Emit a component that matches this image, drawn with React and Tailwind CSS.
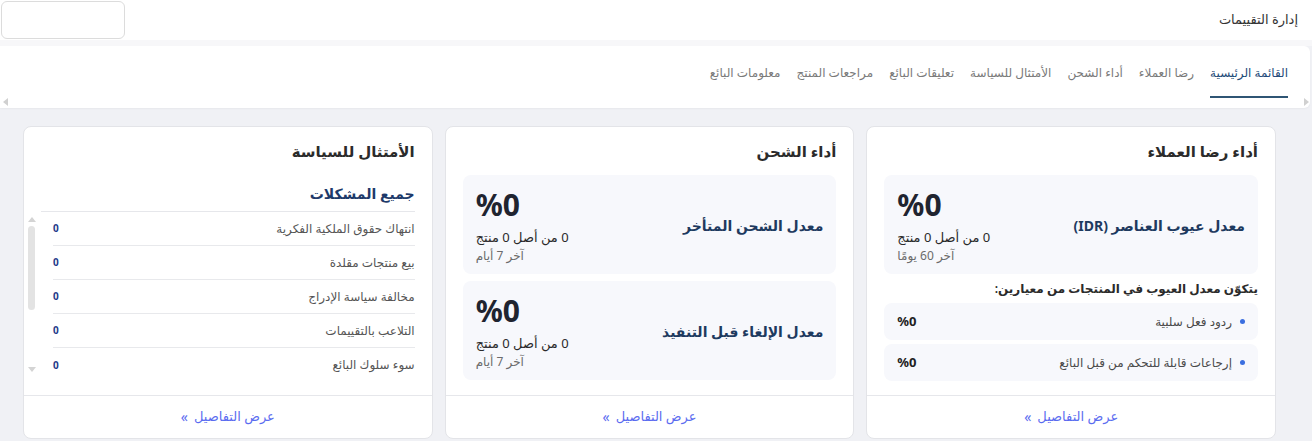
import React from "react";

const tabs = [
  "القائمة الرئيسية",
  "رضا العملاء",
  "أداء الشحن",
  "الأمتثال للسياسة",
  "تعليقات البائع",
  "مراجعات المنتج",
  "معلومات البائع",
];

function Metric({ label, sub }) {
  return (
    <div className="bg-[#f7f8fc] rounded-lg h-[99px] px-[13px] flex items-center justify-between">
      <div className="text-[14px] font-bold text-[#1e3a5f] pt-[2px]">{label}</div>
      <div className="flex flex-col items-end pt-[2px]">
        <div className="text-[30px] font-bold text-[#1f2430] leading-[36px]">%0</div>
        <div className="text-[13px] text-[#2a2a2a] leading-[20px] mt-[4px]">0 من أصل 0 منتج</div>
        <div className="text-[12px] text-[#6b6b6b] leading-[18px]">{sub}</div>
      </div>
    </div>
  );
}

function Footer() {
  return (
    <div className="border-t border-[#e6e7eb] h-[43px] flex items-center justify-center shrink-0">
      <span className="text-[13px] text-[#5b6cf0] flex items-center gap-[6px]">
        عرض التفاصيل
        <span className="text-[14px] leading-none">»</span>
      </span>
    </div>
  );
}

function Card({ title, children }) {
  return (
    <div className="w-[410px] h-[313px] bg-white border border-[#e3e4e8] rounded-lg flex flex-col overflow-hidden">
      <div className="flex-1 px-[17px] pt-[13px]">
        <div className="text-[15px] font-bold text-[#2b2b2b] leading-[22px] mb-[13px]">{title}</div>
        {children}
      </div>
      <Footer />
    </div>
  );
}

function SubRow({ label }) {
  return (
    <div className="bg-[#f7f8fc] rounded-lg h-[37px] px-[13px] flex items-center justify-between">
      <div className="flex items-center gap-[8px]">
        <span className="w-[5px] h-[5px] rounded-full bg-[#3b6fe0]"></span>
        <span className="text-[12px] text-[#4a4a4a]">{label}</span>
      </div>
      <span className="text-[13px] font-bold text-[#222]">%0</span>
    </div>
  );
}

const issues = [
  "انتهاك حقوق الملكية الفكرية",
  "بيع منتجات مقلدة",
  "مخالفة سياسة الإدراج",
  "التلاعب بالتقييمات",
  "سوء سلوك البائع",
];

export default function App() {
  return (
    <div
      dir="rtl"
      className="w-[1312px] h-[441px] bg-[#f0f1f5] overflow-hidden font-['Noto_Sans','DejaVu_Sans',sans-serif]"
    >
      {/* Header */}
      <div className="h-[40px] bg-white flex items-center justify-between pr-[14px] pl-[1px] shadow-[0_2px_6px_rgba(0,0,0,0.03)]">
        <div className="text-[13px] text-[#333]">إدارة التقييمات</div>
        <div className="w-[124px] h-[38px] border border-[#dcdcdc] rounded-md bg-white"></div>
      </div>
      <div className="h-[6px] bg-[#f7f7f9]"></div>

      {/* Tabs */}
      <div className="relative h-[62px] bg-white ml-0 mr-[2px] rounded-l-none rounded-r-md shadow-[0_1px_2px_rgba(0,0,0,0.04)]">
        <div className="flex items-start gap-[16px] pr-[22px] pt-[17px]">
          {tabs.map((t, i) => (
            <div key={t} className="flex flex-col items-stretch">
              <div
                className={
                  "text-[12px] leading-[20px] " +
                  (i === 0 ? "text-[#1e4a78]" : "text-[#7a7a7a]")
                }
              >
                {t}
              </div>
              {i === 0 ? (
                <div className="h-[2px] bg-[#2f5574] mt-[13px]"></div>
              ) : null}
            </div>
          ))}
        </div>
        <span className="absolute left-[3px] bottom-[2px] w-0 h-0 border-y-[4px] border-y-transparent border-r-[5px] border-r-[#d0d0d0]"></span>
        <span className="absolute right-[1px] bottom-[2px] w-0 h-0 border-y-[4px] border-y-transparent border-l-[5px] border-l-[#d0d0d0]"></span>
      </div>

      {/* Cards */}
      <div className="flex gap-[12px] pt-[18px] pr-[36px] pl-[23px]">
        <Card title="أداء رضا العملاء">
          <Metric label="معدل عيوب العناصر (IDR)" sub="آخر 60 يومًا" />
          <div className="text-[12px] font-semibold text-[#2b2b2b] mt-[6px] mb-[5px] leading-[18px]">
            يتكوّن معدل العيوب في المنتجات من معيارين:
          </div>
          <div className="flex flex-col gap-[4px]">
            <SubRow label="ردود فعل سلبية" />
            <SubRow label="إرجاعات قابلة للتحكم من قبل البائع" />
          </div>
        </Card>

        <Card title="أداء الشحن">
          <div className="flex flex-col gap-[7px]">
            <Metric label="معدل الشحن المتأخر" sub="آخر 7 أيام" />
            <Metric label="معدل الإلغاء قبل التنفيذ" sub="آخر 7 أيام" />
          </div>
        </Card>

        <Card title="الأمتثال للسياسة">
          <div className="text-[14px] font-bold text-[#1e3a6a] leading-[20px] mt-[22px] pb-[7px] border-b border-[#e6e7eb]">
            جميع المشكلات
          </div>
          <div className="flex ml-[-14px]">
            <div className="flex-1 pl-[16px]">
              {issues.map((t, i) => (
                <div
                  key={t}
                  className={
                    "h-[34px] flex items-center justify-between " +
                    (i < issues.length - 1 ? "border-b border-[#e8e9ec]" : "")
                  }
                >
                  <span className="text-[12px] text-[#555]">{t}</span>
                  <span className="text-[10px] font-bold text-[#1e3a8a]">0</span>
                </div>
              ))}
            </div>
            <div className="w-[10px] flex flex-col items-center pt-[5px]">
              <span className="w-0 h-0 border-x-[4px] border-x-transparent border-b-[5px] border-b-[#d4d4d4]"></span>
              <span className="w-[7px] h-[84px] rounded-full bg-[#e3e3e3] mt-[4px]"></span>
              <span className="w-0 h-0 border-x-[4px] border-x-transparent border-t-[5px] border-t-[#d4d4d4] mt-[57px]"></span>
            </div>
          </div>
        </Card>
      </div>
    </div>
  );
}
